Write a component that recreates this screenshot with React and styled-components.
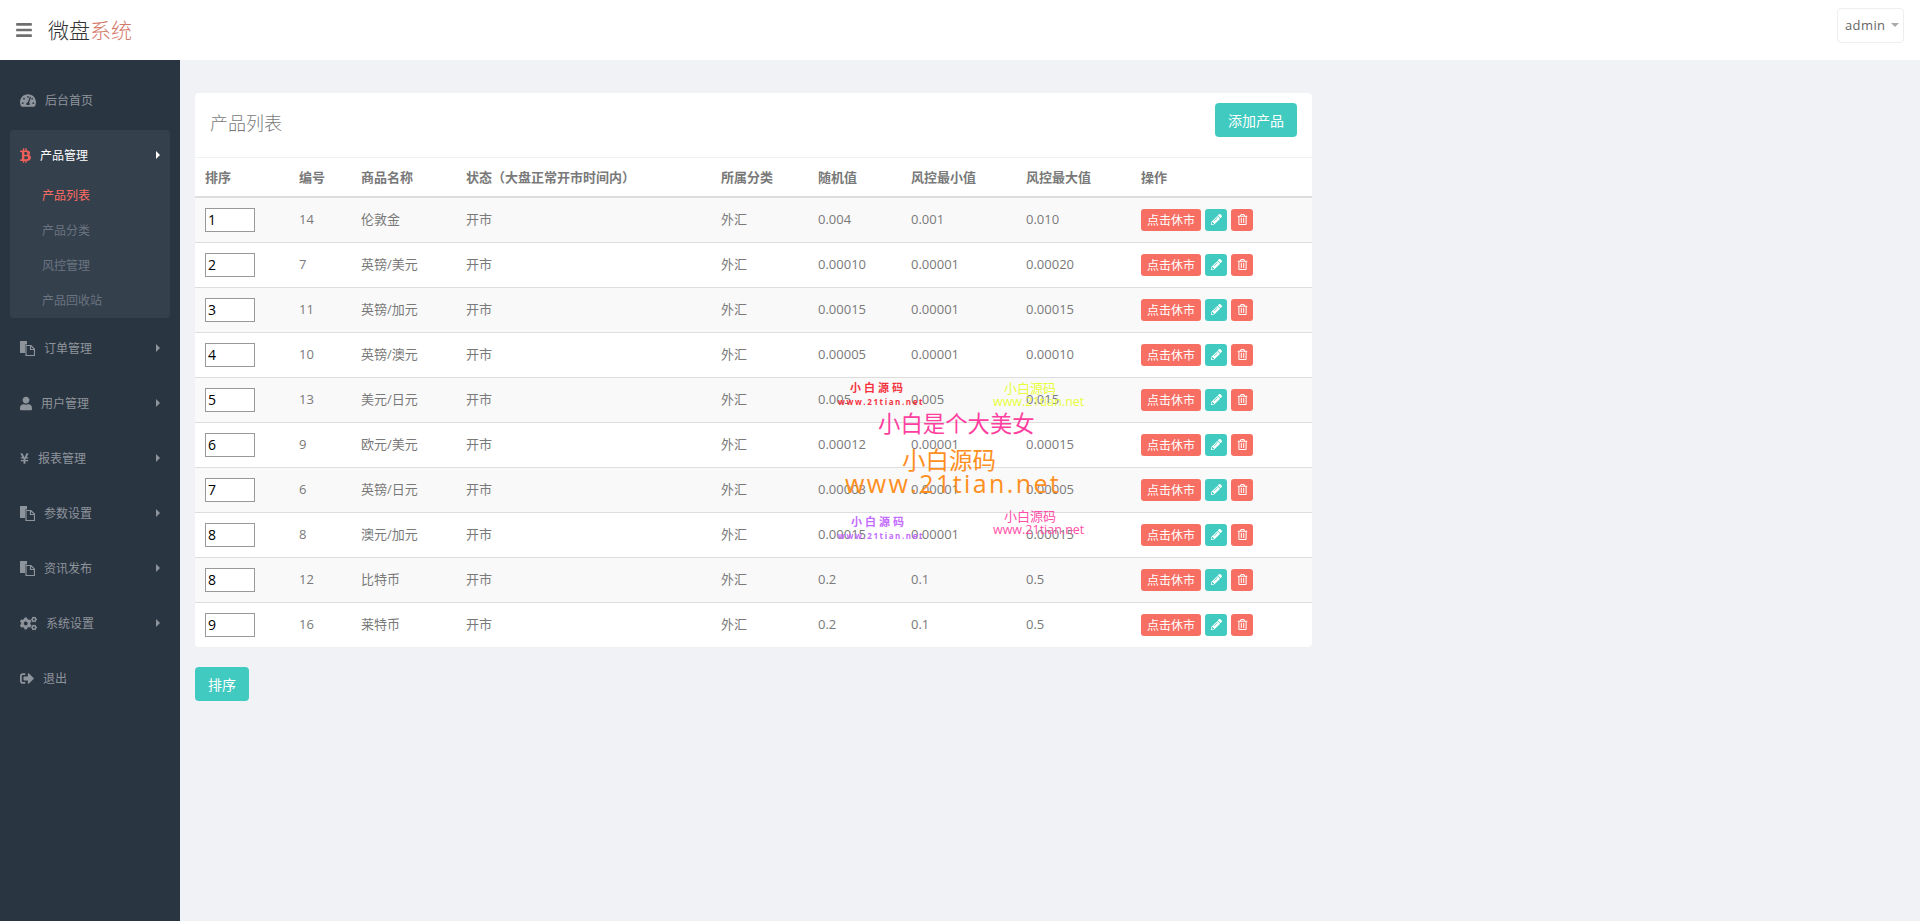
import React from 'react';
import styled, { createGlobalStyle } from 'styled-components';
import {
    FaBars,
    FaBtc,
    FaCogs,
    FaPencilAlt,
    FaRegTrashAlt,
    FaSignOutAlt,
    FaTachometerAlt,
    FaUser,
    FaYenSign,
} from 'react-icons/fa';

const FONT = '"Open Sans", "Noto Sans CJK SC", "Noto Sans", sans-serif';

const products = [
    { sort: 1, id: 14, name: '伦敦金', rand: '0.004', min: '0.001', max: '0.010' },
    { sort: 2, id: 7, name: '英镑/美元', rand: '0.00010', min: '0.00001', max: '0.00020' },
    { sort: 3, id: 11, name: '英镑/加元', rand: '0.00015', min: '0.00001', max: '0.00015' },
    { sort: 4, id: 10, name: '英镑/澳元', rand: '0.00005', min: '0.00001', max: '0.00010' },
    { sort: 5, id: 13, name: '美元/日元', rand: '0.005', min: '0.005', max: '0.015' },
    { sort: 6, id: 9, name: '欧元/美元', rand: '0.00012', min: '0.00001', max: '0.00015' },
    { sort: 7, id: 6, name: '英镑/日元', rand: '0.00003', min: '0.00001', max: '0.00005' },
    { sort: 8, id: 8, name: '澳元/加元', rand: '0.00015', min: '0.00001', max: '0.00015' },
    { sort: 8, id: 12, name: '比特币', rand: '0.2', min: '0.1', max: '0.5' },
    { sort: 9, id: 16, name: '莱特币', rand: '0.2', min: '0.1', max: '0.5' },
];

const columns = [
    { title: '排序', width: 94 },
    { title: '编号', width: 62 },
    { title: '商品名称', width: 105 },
    { title: '状态（大盘正常开市时间内）', width: 255 },
    { title: '所属分类', width: 97 },
    { title: '随机值', width: 93 },
    { title: '风控最小值', width: 115 },
    { title: '风控最大值', width: 115 },
    { title: '操作', width: 181 },
];

// solid sheet behind, outlined sheet with a folded corner in front
function FilesIcon() {
    return (
        <svg viewBox="0 0 15 15" fill="currentColor">
            <path d="M0.5 0h6.5l0 3.5h-2v8.5h-4.5a0.5 0.5 0 0 1-0.5-0.5v-11a0.5 0.5 0 0 1 0.5-0.5z" />
            <path
                d="M6 4.5h5l3.5 3.5v6.5h-8.5zM10.5 4.5v4h4"
                fill="none"
                stroke="currentColor"
                strokeWidth="1.2"
            />
        </svg>
    );
}

const menuAfter = [
    { label: '订单管理', icon: <FilesIcon />, width: 15, arrow: true },
    { label: '用户管理', icon: <FaUser />, width: 12, arrow: true },
    { label: '报表管理', icon: <FaYenSign />, width: 9, arrow: true },
    { label: '参数设置', icon: <FilesIcon />, width: 15, arrow: true },
    { label: '资讯发布', icon: <FilesIcon />, width: 15, arrow: true },
    { label: '系统设置', icon: <FaCogs />, width: 17, arrow: true },
    { label: '退出', icon: <FaSignOutAlt />, width: 14 },
];

const subMenu = ['产品列表', '产品分类', '风控管理', '产品回收站'];

const stamps = [
    { x: 850, y: 379, size: 11, color: '#f5333f', spacing: 3, bold: true, text: '小白源码' },
    { x: 838, y: 396, size: 8, color: '#f5333f', spacing: 1.6, bold: true, text: 'www.21tian.net' },
    { x: 1004, y: 378, size: 13, color: '#e8ff3c', text: '小白源码' },
    { x: 993, y: 393, size: 12.5, color: '#e8ff3c', text: 'www.21tian.net' },
    { x: 878, y: 406, size: 22.4, color: '#ff3fa0', text: '小白是个大美女' },
    { x: 902, y: 442, size: 23.5, color: '#ff8f1f', text: '小白源码' },
    { x: 845, y: 466, size: 25, color: '#ff8f1f', spacing: 2.4, text: 'www.21tian.net' },
    { x: 851, y: 513, size: 11, color: '#c46bff', spacing: 3, bold: true, text: '小白源码' },
    { x: 838, y: 530, size: 8, color: '#c46bff', spacing: 1.6, bold: true, text: 'www.21tian.net' },
    { x: 1004, y: 506, size: 13, color: '#ff4fa8', text: '小白源码' },
    { x: 993, y: 521, size: 12.5, color: '#ff4fa8', text: 'www.21tian.net' },
];

function MenuItem({ label, icon, width, arrow }) {
    return (
        <MenuRow>
            <MenuIcon $width={width}>{icon}</MenuIcon>
            <MenuLabel>{label}</MenuLabel>
            {arrow && <Arrow />}
        </MenuRow>
    );
}

function App() {
    return (
        <>
            <GlobalStyle />
            <Header>
                <BarsButton><FaBars /></BarsButton>
                <Logo>微盘<em>系统</em></Logo>
                <UserBox>admin<Caret /></UserBox>
            </Header>
            <Body>
                <Sidebar>
                    <MenuItem label="后台首页" icon={<FaTachometerAlt />} width={16} />
                    <MenuGroup>
                        <GroupHead>
                            <MenuIcon $width={11} $red><FaBtc /></MenuIcon>
                            <GroupLabel>产品管理</GroupLabel>
                            <Arrow $white />
                        </GroupHead>
                        {subMenu.map((name, i) => (
                            <SubItem key={name} $active={i === 0}>{name}</SubItem>
                        ))}
                    </MenuGroup>
                    {menuAfter.map((item) => (
                        <MenuItem key={item.label} {...item} />
                    ))}
                </Sidebar>
                <Main>
                    <Panel>
                        <PanelHead>
                            <PanelTitle>产品列表</PanelTitle>
                            <TealButton>添加产品</TealButton>
                        </PanelHead>
                        <Table>
                            <thead>
                                <tr>
                                    {columns.map((col) => (
                                        <Th key={col.title} $width={col.width}>{col.title}</Th>
                                    ))}
                                </tr>
                            </thead>
                            <tbody>
                                {products.map((p) => (
                                    <Row key={p.id}>
                                        <Td><SortInput defaultValue={p.sort} /></Td>
                                        <TextTd>{p.id}</TextTd>
                                        <TextTd>{p.name}</TextTd>
                                        <TextTd>开市</TextTd>
                                        <TextTd>外汇</TextTd>
                                        <TextTd>{p.rand}</TextTd>
                                        <TextTd>{p.min}</TextTd>
                                        <TextTd>{p.max}</TextTd>
                                        <Td>
                                            <Actions>
                                                <SmallButton $red>点击休市</SmallButton>
                                                <SmallButton $icon><FaPencilAlt /></SmallButton>
                                                <SmallButton $red $icon><FaRegTrashAlt /></SmallButton>
                                            </Actions>
                                        </Td>
                                    </Row>
                                ))}
                            </tbody>
                        </Table>
                    </Panel>
                    <SortButton>排序</SortButton>
                </Main>
            </Body>
            {stamps.map((s, i) => (
                <Stamp key={i} $x={s.x} $y={s.y} $size={s.size} $color={s.color} $spacing={s.spacing} $bold={s.bold}>
                    {s.text}
                </Stamp>
            ))}
        </>
    );
}

const GlobalStyle = createGlobalStyle`
    html, body {
        margin: 0;
        padding: 0;
        height: 100%;
        overflow: hidden;
        background-color: #f0f2f6;
        font-family: ${FONT};
        color: #797979;
    }
    * {
        box-sizing: border-box;
    }
`;

const Header = styled.header`
    display: flex;
    align-items: center;
    height: 60px;
    padding: 0 16px 0 15px;
    background-color: #fff;
`;

const BarsButton = styled.div`
    display: flex;
    width: 33px;
    font-size: 18px;
    color: #6f6f6f;
`;

const Logo = styled.h1`
    flex: 1;
    margin: 0 0 2px;
    font-size: 21px;
    font-weight: 300;
    color: #333;

    & > em {
        font-style: normal;
        color: #d4786a;
    }
`;

const UserBox = styled.div`
    display: flex;
    align-items: center;
    height: 35px;
    width: 67px;
    margin-bottom: 10px;
    padding-left: 7px;
    border: 1px solid #eee;
    border-radius: 4px;
    font-size: 13px;
    letter-spacing: 0.4px;
    color: #666;
`;

const Caret = styled.i`
    margin-left: 6px;
    border-top: 4px solid #aaa;
    border-left: 4px solid transparent;
    border-right: 4px solid transparent;
`;

const Body = styled.div`
    display: flex;
    height: 861px;
`;

const Sidebar = styled.nav`
    display: flex;
    flex-direction: column;
    gap: 5px;
    width: 180px;
    padding: 15px 10px 0;
    background-color: #2a3542;
`;

const MenuRow = styled.div`
    display: flex;
    align-items: center;
    height: 50px;
    padding: 0 10px;
    color: #8e949b;
`;

const MenuIcon = styled.span`
    display: flex;
    flex: none;
    width: ${(p) => p.$width}px;
    margin-right: 9px;
    color: ${(p) => (p.$red ? '#f0605a' : 'inherit')};

    & > svg {
        width: 100%;
        height: 15px;
    }
`;

const MenuLabel = styled.span`
    flex: 1;
    font-size: 12px;
`;

const GroupLabel = styled(MenuLabel)`
    color: #fff;
`;

const Arrow = styled.i`
    border-left: 4px solid ${(p) => (p.$white ? '#fff' : '#8e949b')};
    border-top: 4px solid transparent;
    border-bottom: 4px solid transparent;
`;

const MenuGroup = styled.div`
    height: 188px;
    border-radius: 4px;
    background-color: #35404d;
`;

const GroupHead = styled.div`
    display: flex;
    align-items: center;
    height: 48px;
    padding: 2px 10px 0;
`;

const SubItem = styled.div`
    height: 35px;
    padding-left: 32px;
    font-size: 12px;
    line-height: 35px;
    color: ${(p) => (p.$active ? '#ff6c60' : '#6a7480')};
`;

const Main = styled.main`
    flex: 1;
    padding: 33px 15px 0;
`;

const Panel = styled.section`
    width: 1117px;
    border-radius: 4px;
    background-color: #fff;
    overflow: hidden;
`;

const PanelHead = styled.div`
    display: flex;
    align-items: flex-start;
    justify-content: space-between;
    height: 65px;
    padding: 10px 15px 0;
    border-bottom: 1px solid #eff2f7;
`;

const PanelTitle = styled.h2`
    margin: 0;
    font-size: 18px;
    font-weight: 300;
    line-height: 40px;
    color: #797979;
`;

const TealButton = styled.button`
    height: 34px;
    padding: 0 13px;
    border: 0;
    border-radius: 4px;
    background-color: #41cac0;
    font-family: ${FONT};
    font-size: 14px;
    color: #fff;
`;

const SortButton = styled(TealButton)`
    display: block;
    margin-top: 20px;
    width: 54px;
    padding: 0;
`;

const Table = styled.table`
    width: 100%;
    border-collapse: collapse;
    table-layout: fixed;
    font-size: 13px;
`;

const Th = styled.th`
    width: ${(p) => p.$width}px;
    height: 39px;
    padding: 0 10px 2px;
    border-bottom: 2px solid #ddd;
    font-weight: 600;
    text-align: left;
    color: #797979;
    white-space: nowrap;
`;

const Row = styled.tr`
    height: 45px;
    border-bottom: 1px solid #ddd;

    &:nth-child(odd) {
        background-color: #f9f9f9;
    }

    &:last-child {
        border-bottom: 0;
    }
`;

const Td = styled.td`
    padding: 0 10px;
`;

const TextTd = styled(Td)`
    padding-bottom: 2px;
`;

const SortInput = styled.input`
    display: block;
    width: 50px;
    height: 24px;
    padding: 0 2px;
    border: 1px solid #999;
    background-color: #fff;
    font-family: ${FONT};
    font-size: 14px;
    color: #000;
    outline: none;
`;

const Actions = styled.div`
    display: flex;
    gap: 4px;
`;

const SmallButton = styled.button`
    display: flex;
    align-items: center;
    justify-content: center;
    width: ${(p) => (p.$icon ? '22px' : '60px')};
    height: 22px;
    padding: 0;
    border: 0;
    border-radius: 3px;
    background-color: ${(p) => (p.$red ? '#f76e62' : '#41cac0')};
    font-family: ${FONT};
    font-size: 12px;
    color: #fff;

    & > svg {
        font-size: 11px;
    }
`;

const Stamp = styled.div`
    position: absolute;
    left: ${(p) => p.$x}px;
    top: ${(p) => p.$y}px;
    font-size: ${(p) => p.$size}px;
    font-weight: ${(p) => (p.$bold ? 700 : 400)};
    letter-spacing: ${(p) => p.$spacing || 0}px;
    color: ${(p) => p.$color};
    white-space: nowrap;
    pointer-events: none;
`;

export default App;
